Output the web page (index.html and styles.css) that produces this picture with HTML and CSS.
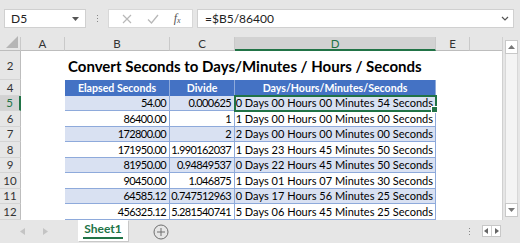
FILE: index.html
```html
<!DOCTYPE html>
<html>
<head>
<meta charset="utf-8">
<link rel="stylesheet" href="styles.css">
</head>
<body>
<div class="app">
  <div class="fbar">
    <div class="namebox"><span>D5</span>
      <svg class="dd" width="7" height="4" viewBox="0 0 7 4"><path d="M0 0H7L3.5 4Z" fill="#555"/></svg>
    </div>
    <div class="vdots"><i></i><i></i><i></i></div>
    <div class="btnbox">
      <svg width="10" height="10" viewBox="0 0 10 10"><path d="M1 1L9 9M9 1L1 9" stroke="#b8b8b8" stroke-width="1.2"/></svg>
      <svg width="12" height="10" viewBox="0 0 12 10"><path d="M1 5.5L4.5 9L11 1" stroke="#b8b8b8" stroke-width="1.3" fill="none"/></svg>
      <span class="fx">f<sub>x</sub></span>
    </div>
    <div class="fbox"><span>=$B5/86400</span>
      <svg class="chev" width="8" height="5" viewBox="0 0 8 5"><path d="M1 1L4 4L7 1" stroke="#555" stroke-width="1.2" fill="none"/></svg>
    </div>
  </div>
  <div class="main">
    <div class="grid">
      <div class="ch corner"><svg width="12" height="12" viewBox="0 0 12 12"><path d="M12 0V12H0Z" fill="#b5b5b5"/></svg></div>
      <div class="ch">A</div><div class="ch">B</div><div class="ch">C</div><div class="ch sel">D</div><div class="ch">E</div><div class="ch last"></div>

      <div class="rh">2</div><div class="c"></div><div class="c title">Convert Seconds to Days/Minutes / Hours / Seconds</div><div class="c"></div><div class="c"></div>

      <div class="rh">4</div><div class="c"></div><div class="th">Elapsed Seconds</div><div class="th">Divide</div><div class="th">Days/Hours/Minutes/Seconds</div><div class="c"></div><div class="c"></div>

      <div class="rh rsel">5</div><div class="c"></div><div class="td n b">54.00</div><div class="td n b">0.000625</div><div class="td b active">0 Days 00 Hours 00 Minutes 54 Seconds</div><div class="c"></div><div class="c"></div>
      <div class="rh">6</div><div class="c"></div><div class="td n">86400.00</div><div class="td n">1</div><div class="td">1 Days 00 Hours 00 Minutes 00 Seconds</div><div class="c"></div><div class="c"></div>
      <div class="rh">7</div><div class="c"></div><div class="td n b">172800.00</div><div class="td n b">2</div><div class="td b">2 Days 00 Hours 00 Minutes 00 Seconds</div><div class="c"></div><div class="c"></div>
      <div class="rh">8</div><div class="c"></div><div class="td n">171950.00</div><div class="td n">1.990162037</div><div class="td">1 Days 23 Hours 45 Minutes 50 Seconds</div><div class="c"></div><div class="c"></div>
      <div class="rh">9</div><div class="c"></div><div class="td n b">81950.00</div><div class="td n b">0.94849537</div><div class="td b">0 Days 22 Hours 45 Minutes 50 Seconds</div><div class="c"></div><div class="c"></div>
      <div class="rh">10</div><div class="c"></div><div class="td n">90450.00</div><div class="td n">1.046875</div><div class="td">1 Days 01 Hours 07 Minutes 30 Seconds</div><div class="c"></div><div class="c"></div>
      <div class="rh">11</div><div class="c"></div><div class="td n b">64585.12</div><div class="td n b">0.747512963</div><div class="td b">0 Days 17 Hours 56 Minutes 25 Seconds</div><div class="c"></div><div class="c"></div>
      <div class="rh">12</div><div class="c"></div><div class="td n">456325.12</div><div class="td n">5.281540741</div><div class="td">5 Days 06 Hours 45 Minutes 25 Seconds</div><div class="c"></div><div class="c"></div>
    </div>
    <div class="vscroll">
      <div class="sbtn"><svg width="7" height="4" viewBox="0 0 7 4"><path d="M0 4H7L3.5 0Z" fill="#777"/></svg></div>
      <div class="strack"></div>
      <div class="sbtn"><svg width="7" height="4" viewBox="0 0 7 4"><path d="M0 0H7L3.5 4Z" fill="#777"/></svg></div>
    </div>
  </div>
  <div class="tabs">
    <div class="nav">
      <svg width="5" height="7" viewBox="0 0 5 7"><path d="M5 0V7L0 3.5Z" fill="#c4c4c4"/></svg>
      <svg width="5" height="7" viewBox="0 0 5 7"><path d="M0 0V7L5 3.5Z" fill="#c4c4c4"/></svg>
    </div>
    <div class="tab"><span>Sheet1</span></div>
    <svg class="plus" width="16" height="16" viewBox="0 0 16 16"><circle cx="8" cy="8" r="7" fill="none" stroke="#6e6e6e" stroke-width="1"/><path d="M8 4V12M4 8H12" stroke="#6e6e6e" stroke-width="1"/></svg>
    <div class="spacer"></div>
    <div class="hdots"><i></i><i></i><i></i></div>
    <div class="harrows">
      <svg width="4" height="6" viewBox="0 0 4 6"><path d="M4 0V6L0 3Z" fill="#666"/></svg>
      <span class="sep"></span>
      <svg width="4" height="6" viewBox="0 0 4 6"><path d="M0 0V6L4 3Z" fill="#666"/></svg>
    </div>
  </div>
</div>
</body>
</html>
```
FILE: styles.css
```css
* { box-sizing: border-box; }
html, body { margin: 0; padding: 0; }
body { width: 520px; height: 243px; overflow: hidden; font-family: Lato, "Open Sans", sans-serif; }
.app { width: 520px; height: 243px; display: flex; flex-direction: column; background: #e6e6e6; }

.fbar { height: 37px; display: flex; align-items: flex-start; padding: 9px 6px 0 4px; }
.namebox { width: 82px; height: 19px; background: #fff; border: 1px solid #d0d0d0; display: flex; align-items: center; justify-content: space-between; padding: 0 6px 0 6px; font-size: 12px; color: #222; }
.vdots { width: 22px; height: 19px; display: flex; flex-direction: column; align-items: center; justify-content: center; gap: 2px; }
.vdots i { display: block; width: 1px; height: 1px; background: #888; }
.btnbox { width: 85px; height: 19px; background: #fff; border: 1px solid #d8d8d8; display: flex; align-items: center; justify-content: space-around; padding: 0 4px 0 6px; }
.fx { font-family: "Liberation Serif", serif; font-style: italic; font-size: 12px; color: #555; }
.fx sub { font-size: 8px; vertical-align: -1px; }
.fbox { flex: 1; margin-left: 4px; height: 19px; background: #fff; border: 1px solid #d0d0d0; display: flex; align-items: center; justify-content: space-between; padding: 0 4px 0 7px; font-size: 12px; color: #222; }

.main { height: 182.5px; display: flex; }
.grid { width: 502px; display: grid; grid-template-columns: 21px 44px 105px 65px 201px 34px 32px; grid-template-rows: 14px 29px repeat(9, 15.5px); background: #fff; }
.ch { background: #e6e6e6; border-right: 1px solid #c9c9c9; border-bottom: 1px solid #bdbdbd; font-size: 11.5px; color: #333; display: flex; align-items: center; justify-content: center; }
.ch.corner { justify-content: flex-end; align-items: flex-end; padding: 0 2px 2px 0; }
.ch.sel { background: #d2d2d2; color: #217346; border-bottom: 2px solid #217346; }
.ch.last { border-right: none; }
.rh { background: #e6e6e6; border-right: 1px solid #bdbdbd; border-bottom: 1px solid #d4d4d4; font-size: 11.5px; color: #333; display: flex; align-items: center; justify-content: center; }
.rh.rsel { background: #d2d2d2; color: #217346; border-right: 2px solid #217346; }
.c { background: #fff; }
.title { grid-column: span 3; font-weight: 700; font-size: 15px; color: #000; display: flex; align-items: center; padding-left: 3px; white-space: nowrap; }
.th { background: #4472c4; color: #fff; font-weight: 700; font-size: 10.6px; display: flex; align-items: center; justify-content: center; border-right: 1px solid #8eaadb; white-space: nowrap; }
.td { background: #fff; font-size: 11px; color: #000; display: flex; align-items: center; justify-content: flex-end; padding-right: 2px; border-right: 1px solid #8eaadb; border-bottom: 1px solid #8eaadb; white-space: nowrap; }
.td.n { letter-spacing: -0.6px; padding-right: 3px; }
.td.b { background: #d9e1f2; }
.active { position: relative; outline: 2px solid #217346; outline-offset: -1px; z-index: 1; }
.active::after { content: ""; position: absolute; right: -3px; bottom: -3px; width: 5px; height: 5px; background: #217346; border: 1px solid #fff; }

.vscroll { width: 18px; background: #e6e6e6; border-left: 1px solid #d0d0d0; display: flex; flex-direction: column; padding: 3px 2px 3px 2px; }
.sbtn { height: 14px; background: #fff; border: 1px solid #c8c8c8; display: flex; align-items: center; justify-content: center; }
.strack { flex: 1; background: #f4f4f4; border-left: 1px solid #d8d8d8; border-right: 1px solid #d8d8d8; }

.tabs { flex: 1; display: flex; align-items: flex-start; }
.nav { width: 78px; height: 23px; display: flex; align-items: center; gap: 18px; padding-left: 20px; }
.tab { width: 50px; height: 21px; background: #fff; display: flex; justify-content: center; align-items: flex-start; box-shadow: 1px 1px 0 #c8c8c8; }
.tab span { font-weight: 700; font-size: 12px; color: #217346; border-bottom: 2px solid #217346; padding: 2px 1px 1px; line-height: 14px; }
.plus { margin: 4px 0 0 25px; }
.spacer { flex: 1; }
.hdots { width: 4px; height: 23px; display: flex; flex-direction: column; align-items: center; justify-content: center; gap: 2px; margin-right: 11px; }
.hdots i { display: block; width: 1px; height: 1px; background: #888; }
.harrows { margin: 5px 19px 0 0; width: 19px; height: 12px; background: #fff; border: 1px solid #c8c8c8; display: flex; align-items: center; justify-content: space-around; }
.harrows .sep { width: 1px; height: 10px; background: #d0d0d0; }
```
